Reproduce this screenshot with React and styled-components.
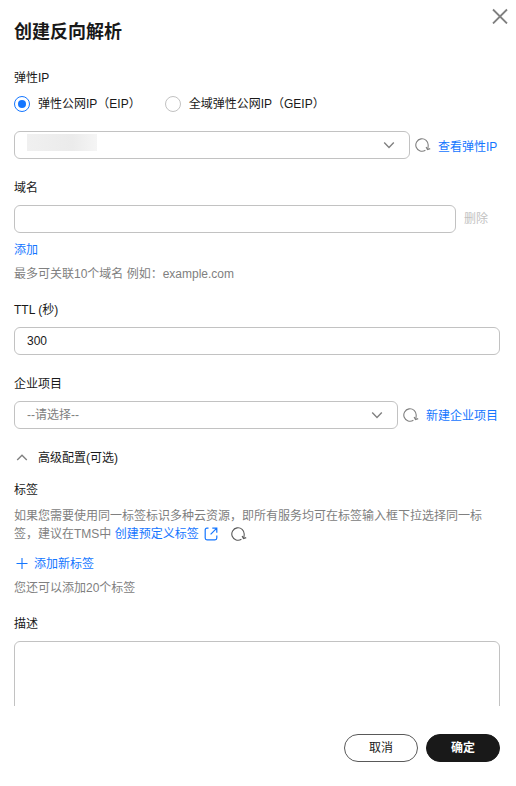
import React from 'react';
import styled, {createGlobalStyle} from 'styled-components';

const GlobalStyle = createGlobalStyle`
  * {
    box-sizing: border-box;
  }
  body {
    margin: 0;
    background-color: #fff;
  }
  body,
  button,
  input,
  textarea {
    font-family: 'Liberation Sans', 'Noto Sans CJK SC', sans-serif;
    font-size: 12px;
    line-height: 18px;
    color: #191919;
  }
`;

const Drawer = styled.div`
  display: flex;
  flex-direction: column;

  width: 516px;
  height: 786px;
  overflow: hidden;
`;
const Header = styled.header`
  display: flex;
  justify-content: space-between;
  flex-shrink: 0;

  height: 69px;
  padding: 8px 8px 0 14px;
`;
const Title = styled.h1`
  margin: 12px 0 0;
  font-size: 18px;
  line-height: 24px;
  font-weight: 700;
`;
const IconButton = styled.button`
  display: flex;
  flex-shrink: 0;
  justify-content: center;
  align-items: center;

  width: 16px;
  height: 16px;
  padding: 0;
  border: 0;
  background: none;
  cursor: pointer;
  color: #808080;
`;
const Content = styled.main`
  flex-shrink: 0;
  height: 637px;
  padding: 0 16px 0 14px;
  overflow: hidden;
`;
const Field = styled.section`
  margin-bottom: ${props => props.$gap}px;
`;
const Label = styled.div`
  height: 18px;
  margin-bottom: 8px;
`;
const RadioGroup = styled.div`
  display: flex;
  gap: 24px;
  margin-bottom: 18px;
`;
const RadioLabel = styled.label`
  display: flex;
  align-items: center;
  gap: 8px;
  height: 18px;
  white-space: nowrap;
`;
const RadioDot = styled.span`
  display: flex;
  justify-content: center;
  align-items: center;

  width: 16px;
  height: 16px;
  border: 1px solid ${props => (props.$checked ? '#1476ff' : '#c2c2c2')};
  border-radius: 50%;

  &::after {
    content: '';
    width: 8px;
    height: 8px;
    border-radius: 50%;
    background-color: ${props => (props.$checked ? '#1476ff' : 'transparent')};
  }
`;
const Row = styled.div`
  display: flex;
  align-items: center;
  height: 28px;
`;
const SelectBox = styled.div`
  display: flex;
  flex-shrink: 0;
  justify-content: space-between;
  align-items: center;

  width: ${props => props.$width}px;
  height: 28px;
  margin-right: 5px;
  padding: 0 14px 0 12px;
  border: 1px solid #c2c2c2;
  border-radius: 6px;
  color: #808080;
`;
const MaskedValue = styled.span`
  width: 70px;
  height: 17px;
  margin-bottom: 5px;
  background: linear-gradient(90deg, #f0f0f0, #ebebeb 65%, #f5f5f5);
`;
const TextInput = styled.input`
  width: ${props => props.$width}px;
  height: 28px;
  padding: 0 12px 1px;
  border: 1px solid #c2c2c2;
  border-radius: 6px;
  outline: 0;
  background-color: #fff;
`;
const TextArea = styled.textarea`
  display: block;
  width: 100%;
  height: 90px;
  padding: 6px 12px;
  border: 1px solid #c2c2c2;
  border-radius: 6px;
  outline: 0;
  resize: none;
`;
const Link = styled.a`
  color: #1476ff;
  cursor: pointer;
  white-space: nowrap;
`;
const RowLink = styled(Link)`
  margin: ${props => props.$top}px 0 0 7px;
`;
const DisabledLink = styled.span`
  margin-left: 8px;
  color: #c2c2c2;
`;
const AddDomain = styled(Link)`
  display: block;
  width: max-content;
  margin-top: 8px;
`;
const Hint = styled.div`
  margin-top: ${props => props.$top || 0}px;
  color: #808080;
`;
const TagHint = styled(Hint)`
  width: 472px;
`;
const InlineIcon = styled.span`
  display: inline-flex;
  height: 18px;
  align-items: center;
  vertical-align: top;
  margin-left: ${props => props.$left}px;
  color: ${props => props.$color};
`;
const Collapse = styled.div`
  display: flex;
  align-items: center;
  gap: 8px;
  height: 18px;
  margin-bottom: 14px;
`;
const AddTag = styled(Link)`
  display: flex;
  align-items: center;
  gap: 4px;
  height: 18px;
  margin-top: 12px;
`;
const Footer = styled.footer`
  display: flex;
  justify-content: flex-end;
  gap: 8px;
  padding: 28px 16px 0 0;
`;
const FooterButton = styled.button`
  width: 74px;
  height: 28px;
  padding: 0;
  border: 1px solid ${props => (props.$primary ? '#191919' : '#595959')};
  border-radius: 14px;
  cursor: pointer;

  font-weight: ${props => (props.$primary ? 700 : 400)};
  color: ${props => (props.$primary ? '#fff' : '#191919')};
  background-color: ${props => (props.$primary ? '#191919' : '#fff')};
`;

function CloseIcon() {
  return (
    <svg width="16" height="16" viewBox="0 0 16 16" fill="none">
      <path d="M1 1.5L15 15.5M15 1.5L1 15.5" stroke="currentColor" strokeWidth="1.8" />
    </svg>
  );
}

function ChevronIcon({up}) {
  return (
    <svg width="12" height="16" viewBox="0 0 12 16" fill="none">
      <path
        d={up ? 'M1.2 10.1L6 5.3L10.8 10.1' : 'M1.2 5.6L6 10.4L10.8 5.6'}
        stroke="currentColor"
        strokeWidth="1.4"
      />
    </svg>
  );
}

function RefreshIcon() {
  return (
    <svg width="16" height="16" viewBox="0 0 16 16" fill="none">
      <path
        d="M10.4 13.2A6.2 6.2 0 1 1 13.2 8.3Q13.2 10 12.7 12"
        stroke="currentColor"
        strokeWidth="1.1"
      />
      <path d="M11.1 10L12.5 12.5L15.2 11.6" stroke="currentColor" strokeWidth="1.2" />
    </svg>
  );
}

function ExternalIcon() {
  return (
    <svg width="14" height="14" viewBox="0 0 14 14" fill="none">
      <path
        d="M4.5 1.2H3Q1.2 1.2 1.2 3V11Q1.2 12.8 3 12.8H11Q12.8 12.8 12.8 11V8.5M8.3 1.2H12.8V5.7M12.8 1.2L6.6 7.4"
        stroke="currentColor"
        strokeWidth="1.2"
      />
    </svg>
  );
}

function PlusIcon() {
  return (
    <svg width="16" height="16" viewBox="0 0 16 16" fill="none">
      <path d="M2.5 7.5H13.5M8 2V13" stroke="currentColor" strokeWidth="1.1" />
    </svg>
  );
}

function Radio({checked, children}) {
  return (
    <RadioLabel>
      <RadioDot $checked={checked} />
      {children}
    </RadioLabel>
  );
}

function App() {
  return (
    <>
      <GlobalStyle />
      <Drawer>
        <Header>
          <Title>创建反向解析</Title>
          <IconButton>
            <CloseIcon />
          </IconButton>
        </Header>
        <Content>
          <Field $gap={20}>
            <Label>弹性IP</Label>
            <RadioGroup>
              <Radio checked>弹性公网IP（EIP）</Radio>
              <Radio>全域弹性公网IP（GEIP）</Radio>
            </RadioGroup>
            <Row>
              <SelectBox $width={396}>
                <MaskedValue />
                <ChevronIcon />
              </SelectBox>
              <IconButton>
                <RefreshIcon />
              </IconButton>
              <RowLink $top={3}>查看弹性IP</RowLink>
            </Row>
          </Field>
          <Field $gap={18}>
            <Label>域名</Label>
            <Row>
              <TextInput $width={442} />
              <DisabledLink>删除</DisabledLink>
            </Row>
            <AddDomain>添加</AddDomain>
            <Hint $top={6}>最多可关联10个域名 例如：example.com</Hint>
          </Field>
          <Field $gap={20}>
            <Label>TTL (秒)</Label>
            <Row>
              <TextInput $width={486} defaultValue="300" />
            </Row>
          </Field>
          <Field $gap={20}>
            <Label>企业项目</Label>
            <Row>
              <SelectBox $width={384}>
                --请选择--
                <ChevronIcon />
              </SelectBox>
              <IconButton>
                <RefreshIcon />
              </IconButton>
              <RowLink $top={1}>新建企业项目</RowLink>
            </Row>
          </Field>
          <Collapse>
            <IconButton>
              <ChevronIcon up />
            </IconButton>
            高级配置(可选)
          </Collapse>
          <Field $gap={18}>
            <Label>标签</Label>
            <TagHint>
              如果您需要使用同一标签标识多种云资源，即所有服务均可在标签输入框下拉选择同一标签，建议在TMS中{' '}
              <Link>
                创建预定义标签
                <InlineIcon $left={5} $color="#1476ff">
                  <ExternalIcon />
                </InlineIcon>
              </Link>
              <InlineIcon $left={13} $color="#595959">
                <RefreshIcon />
              </InlineIcon>
            </TagHint>
            <AddTag>
              <PlusIcon />
              添加新标签
            </AddTag>
            <Hint $top={6}>您还可以添加20个标签</Hint>
          </Field>
          <Field $gap={0}>
            <Label>描述</Label>
            <TextArea />
          </Field>
        </Content>
        <Footer>
          <FooterButton>取消</FooterButton>
          <FooterButton $primary>确定</FooterButton>
        </Footer>
      </Drawer>
    </>
  );
}

export default App;
